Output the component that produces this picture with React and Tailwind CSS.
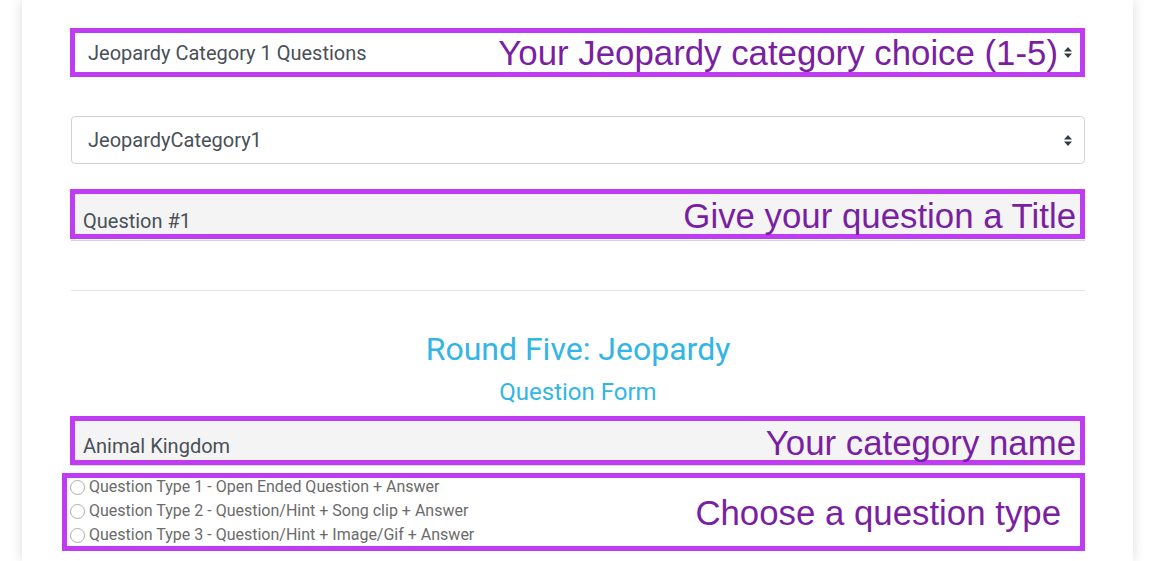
import React from "react";

const annot = "font-['Liberation_Sans',Arial,sans-serif] text-[34.8px] leading-none text-[#7b1fa2]";
const field = "text-[20px] leading-none text-[#495057]";

const SelectArrows = () => (
  <svg width="8" height="11" viewBox="0 0 8 11" className="shrink-0">
    <path d="M0 4.5 L4 0 L8 4.5 Z" fill="#343a40" />
    <path d="M0 6.5 L4 11 L8 6.5 Z" fill="#343a40" />
  </svg>
);

const Radio = ({ label }) => (
  <label className="flex items-center h-6 gap-[4px] text-[16px] text-[#6b6b6b]">
    <span className="w-[15px] h-[15px] rounded-full border border-[#ababab] bg-white shrink-0" />
    {label}
  </label>
);

export default function App() {
  return (
    <div className="min-h-screen bg-white px-[22px] font-['Roboto',sans-serif] overflow-hidden">
      <div className="bg-white h-[561px] shadow-[0_0_12px_rgba(0,0,0,0.14)] pl-[49px] pr-[48px] pt-[28px]">
        {/* category choice */}
        <div className="-ml-px h-[49px] border-[5px] border-[#c03cf2] flex items-start pl-[13px] pr-[8px]">
          <span className={`${field} mt-[10px]`}>Jeopardy Category 1 Questions</span>
          <span className={`${annot} ml-auto mt-[3px]`}>Your Jeopardy category choice (1-5)</span>
          <span className="ml-[6px] mt-[14px]">
            <SelectArrows />
          </span>
        </div>

        {/* select */}
        <div className="mt-[39px] h-[48px] border border-[#ced4da] rounded-[4px] flex items-center pl-[16px] pr-[12px]">
          <span className={field}>JeopardyCategory1</span>
          <span className="ml-auto">
            <SelectArrows />
          </span>
        </div>

        {/* question title */}
        <div className="mt-[25px] -ml-px h-[50px] border-[5px] border-[#c03cf2] bg-[#f4f4f4] flex items-start pl-[8px] pr-[4px]">
          <span className={`${field} mt-[17px]`}>Question #1</span>
          <span className={`${annot} ml-auto mt-[5px]`}>Give your question a Title</span>
        </div>
        <div className="mt-[1px] h-px bg-[#cfd4da]" />

        <hr className="mt-[49px] border-0 h-px bg-[#e3e3e3]" />

        <div className="mt-[42px] text-center text-[32px] leading-none text-[#33b5e5]">Round Five: Jeopardy</div>
        <div className="mt-[15px] text-center text-[24px] leading-none text-[#33b5e5]">Question Form</div>

        {/* category name */}
        <div className="mt-[12px] -ml-px h-[49px] border-[5px] border-[#c03cf2] bg-[#f4f4f4] flex items-start pl-[8px] pr-[4px]">
          <span className={`${field} mt-[15px]`}>Animal Kingdom</span>
          <span className={`${annot} ml-auto mt-[5px]`}>Your category name</span>
        </div>
        <div className="h-px bg-[#d6d9de]" />

        {/* question type */}
        <div className="mt-[7px] -ml-[9px] h-[78px] border-[5px] border-[#c03cf2] flex items-start pl-[3px] pr-[19px]">
          <div className="-mt-[3px] flex flex-col">
            <Radio label="Question Type 1 - Open Ended Question + Answer" />
            <Radio label="Question Type 2 - Question/Hint + Song clip + Answer" />
            <Radio label="Question Type 3 - Question/Hint + Image/Gif + Answer" />
          </div>
          <span className={`${annot} ml-auto mt-[18px]`}>Choose a question type</span>
        </div>
      </div>
    </div>
  );
}
